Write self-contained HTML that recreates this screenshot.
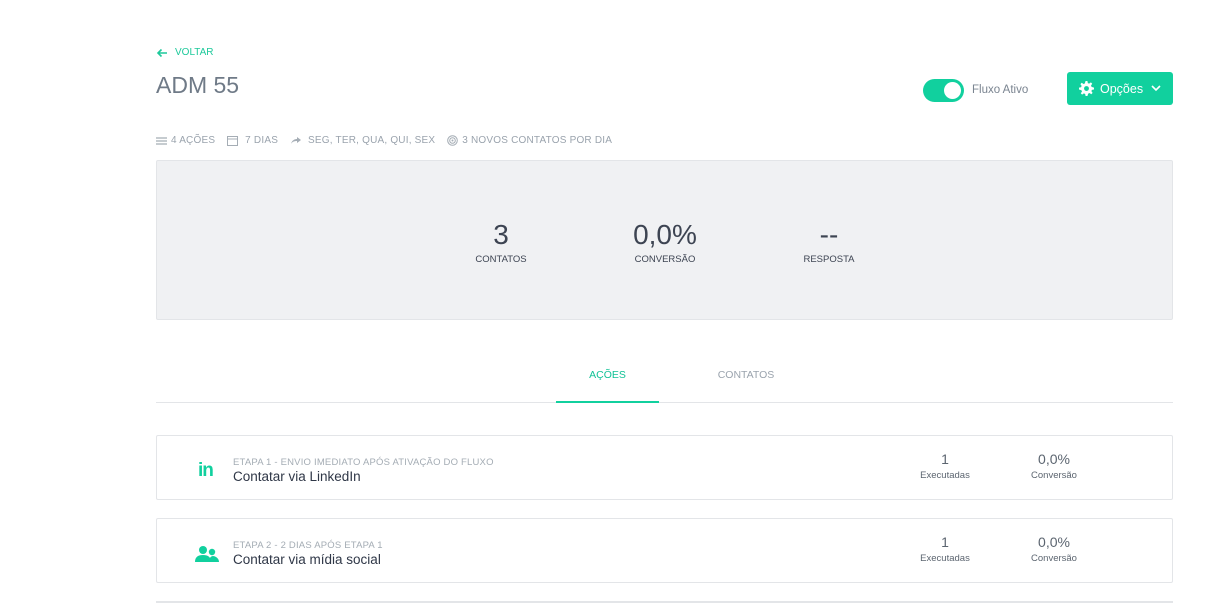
<!DOCTYPE html>
<html><head><meta charset="utf-8"><style>
*{box-sizing:border-box;margin:0;padding:0}
body{width:1231px;height:603px;overflow:hidden;background:#fff;font-family:"Liberation Sans",sans-serif;position:relative;color:#3d4452}
.a{position:absolute}
.meta{position:absolute;font-size:10px;color:#9aa3ad;top:135px;left:156px;display:flex;gap:12px;align-items:center;letter-spacing:.2px}
.meta span{display:flex;align-items:center;gap:4px}
.stat{position:absolute;text-align:center;width:140px}
.stat .n{font-size:28px;color:#3d4452;font-weight:300}
.stat .l{font-size:9.5px;color:#3d4452;margin-top:3px}
.card{position:absolute;left:156px;width:1017px;height:65px;border:1px solid #e3e5e8;border-radius:2px}
.card .t{position:absolute;left:76px;top:21px;font-size:9.5px;color:#a4acb4;letter-spacing:.2px}
.card .m{position:absolute;left:76px;top:33px;font-size:13.5px;color:#2f3747}
.card .c{position:absolute;text-align:center;width:80px;top:15px}
.card .c .v{font-size:14px;color:#5c6570}
.card .c .s{font-size:9.5px;color:#5c6570;margin-top:3px}
</style></head><body>
<div class="a" style="left:156px;top:47px;font-size:10px;color:#1ec99b;display:flex;align-items:center;gap:7px">
<svg width="12" height="10" viewBox="0 0 12 10"><path d="M11 5H2M5.5 1.5L2 5l3.5 3.5" stroke="#1ec99b" stroke-width="1.6" fill="none"/></svg>VOLTAR</div>
<div class="a" style="left:156px;top:72px;font-size:23px;color:#6f7a87">ADM 55</div>
<div class="a" style="left:923px;top:79px;width:41px;height:23px;border-radius:12px;background:#11d09e"><div style="position:absolute;right:3px;top:3px;width:17px;height:17px;border-radius:50%;background:#fff"></div></div>
<div class="a" style="left:972px;top:84px;font-size:11.5px;color:#7a8490">Fluxo Ativo</div>
<div class="a" style="left:1067px;top:72px;width:106px;height:33px;background:#11d09e;border-radius:3px;color:#fff;font-size:12.5px;display:flex;align-items:center;padding-left:12px;gap:6px">
<svg width="15" height="15" viewBox="0 0 16 16"><path fill="#fff" d="M7 0h2l.4 2.2 1.4.6 1.9-1.3 1.4 1.4-1.3 1.9.6 1.4L16 7v2l-2.2.4-.6 1.4 1.3 1.9-1.4 1.4-1.9-1.3-1.4.6L9 16H7l-.4-2.2-1.4-.6-1.9 1.3-1.4-1.4 1.3-1.9-.6-1.4L0 9V7l2.2-.4.6-1.4-1.3-1.9 1.4-1.4 1.9 1.3 1.4-.6z"/><circle cx="8" cy="8" r="2.6" fill="#11d09e"/></svg>
Opções <svg width="10" height="7" viewBox="0 0 10 7" style="margin-left:2px"><path d="M1 1l4 4 4-4" stroke="#fff" stroke-width="1.6" fill="none"/></svg></div>
<div class="meta">
<span><svg width="11" height="8"><path d="M0 1h11M0 4h11M0 7h11" stroke="#a5adb5" stroke-width="1.3"/></svg>4 AÇÕES</span>
<span><svg width="11" height="11"><rect x=".5" y="1.5" width="10" height="9" fill="none" stroke="#a5adb5"/><path d="M1 4h9" stroke="#a5adb5"/></svg>&nbsp;7 DIAS</span>
<span><svg width="11" height="9"><path d="M1 8C2 4 5 3 7 3V1l4 3-4 3V5C4 5 2 6 1 8z" fill="#a5adb5"/></svg>&nbsp;SEG, TER, QUA, QUI, SEX</span>
<span><svg width="11" height="11"><circle cx="5.5" cy="5.5" r="4.8" fill="none" stroke="#a5adb5"/><circle cx="5.5" cy="5.5" r="2.8" fill="none" stroke="#a5adb5"/><circle cx="5.5" cy="5.5" r="1" fill="#a5adb5"/></svg>3 NOVOS CONTATOS POR DIA</span>
</div>
<div class="a" style="left:156px;top:160px;width:1017px;height:160px;background:#f0f1f3;border:1px solid #e3e5e8;border-radius:2px"></div>
<div class="stat" style="left:431px;top:219px"><div class="n">3</div><div class="l">CONTATOS</div></div>
<div class="stat" style="left:595px;top:219px"><div class="n">0,0%</div><div class="l">CONVERSÃO</div></div>
<div class="stat" style="left:759px;top:219px"><div class="n">--</div><div class="l">RESPOSTA</div></div>
<div class="a" style="left:156px;top:402px;width:1017px;height:1px;background:#e3e5e8"></div>
<div class="a" style="left:556px;top:401px;width:103px;height:2px;background:#11d09e"></div>
<div class="a" style="left:556px;top:369px;width:103px;text-align:center;font-size:10.5px;color:#11c296">AÇÕES</div>
<div class="a" style="left:696px;top:369px;width:100px;text-align:center;font-size:10.5px;color:#9aa3ad">CONTATOS</div>
<div class="card" style="top:435px">
<div class="a" style="left:41px;top:24px;font-size:19px;font-weight:bold;color:#11d09e;letter-spacing:-1px">in</div>
<div class="t">ETAPA 1 - ENVIO IMEDIATO APÓS ATIVAÇÃO DO FLUXO</div><div class="m">Contatar via LinkedIn</div>
<div class="c" style="left:748px"><div class="v">1</div><div class="s">Executadas</div></div>
<div class="c" style="left:857px"><div class="v">0,0%</div><div class="s">Conversão</div></div></div>
<div class="card" style="top:518px">
<svg class="a" style="left:38px;top:26px" width="24" height="18" viewBox="0 0 24 18"><circle cx="8" cy="5" r="4" fill="#11d09e"/><path d="M0 17c0-5 3-7 8-7s8 2 8 7z" fill="#11d09e"/><circle cx="17" cy="7" r="3.2" fill="#11d09e"/><path d="M14 17c0-4 2-6 4-6s6 2 6 6z" fill="#11d09e"/></svg>
<div class="t">ETAPA 2 - 2 DIAS APÓS ETAPA 1</div><div class="m">Contatar via mídia social</div>
<div class="c" style="left:748px"><div class="v">1</div><div class="s">Executadas</div></div>
<div class="c" style="left:857px"><div class="v">0,0%</div><div class="s">Conversão</div></div></div>
<div class="a" style="left:156px;top:601px;width:1017px;height:2px;background:#e3e5e8"></div>
</body></html>
